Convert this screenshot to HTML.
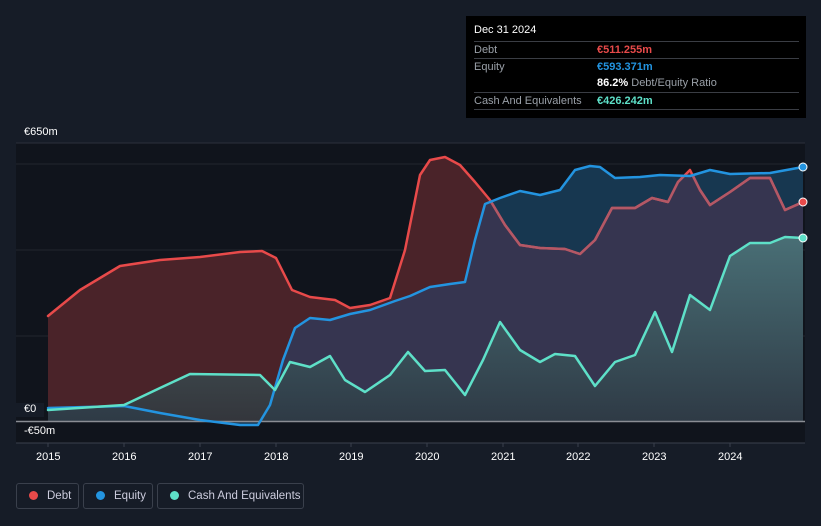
<!DOCTYPE html>
<html><head><meta charset="utf-8"><style>
body{margin:0;width:821px;height:526px;background:#161c27;font-family:"Liberation Sans",sans-serif;overflow:hidden;position:relative}
.tt{position:absolute;left:466px;top:16px;width:340px;height:102px;background:#000;color:#fff;font-size:11px}
.tt .r{position:absolute;left:8px;width:325px;border-top:1px solid #3a3d44;height:16px;line-height:16px}
.tt .l{color:#9aa0a8;position:absolute;left:0}
.tt .v{position:absolute;left:123px;font-weight:bold}
.ax{position:absolute;color:#fff;font-size:11px}
.leg{position:absolute;top:483px;height:26px;border:1px solid #3a404c;border-radius:3px;color:#ccd;font-size:11.5px;line-height:24px;box-sizing:border-box;white-space:nowrap}
.leg i{display:inline-block;width:9px;height:9px;border-radius:50%;margin:0 9px 0 12px;vertical-align:-1px}
</style></head><body>
<svg width="821" height="526" style="position:absolute;left:0;top:0">
<defs>
<clipPath id="eq"><polygon points="48,421 48,408 124,406 160,413 200,420 240,425 258,425 270,405 283,360 295,328 310,318 330,320 350,314 370,310 395,301 410,296 430,287 450,284 465,282 475,240 485,204 500,198 520,191 540,195 560,190 575,170 590,166 600,167 615,178 640,177 660,175 690,176 710,170 730,174 770,173 803,167 803,430 48,430"/></clipPath>
<linearGradient id="cg" x1="0" y1="0" x2="0" y2="1"><stop offset="0" stop-color="#4f8282"/><stop offset="1" stop-color="#2c3c42"/></linearGradient>
</defs>
<rect x="16" y="143" width="789" height="300" fill="#10141c"/>
<line x1="16" y1="143" x2="805" y2="143" stroke="#2c313b"/>
<line x1="16" y1="164" x2="805" y2="164" stroke="#22262e"/>
<line x1="16" y1="250" x2="805" y2="250" stroke="#22262e"/>
<line x1="16" y1="336" x2="805" y2="336" stroke="#22262e"/>
<polygon fill="#4a2329" points="48,421 48,316 80,290 120,266 160,260 200,257 240,252 262,251 276,258 292,290 310,297 335,300 350,308 370,305 390,298 405,250 420,175 430,160 445,157 460,165 475,182 490,200 505,225 520,245 540,248 565,249 580,254 595,240 612,208 635,208 652,198 668,202 678,182 690,170 700,190 710,205 730,192 750,178 770,178 785,210 803,202 803,421"/>
<polygon fill="#173750" points="48,421 48,408 124,406 160,413 200,420 240,425 258,425 270,405 283,360 295,328 310,318 330,320 350,314 370,310 395,301 410,296 430,287 450,284 465,282 475,240 485,204 500,198 520,191 540,195 560,190 575,170 590,166 600,167 615,178 640,177 660,175 690,176 710,170 730,174 770,173 803,167 803,421"/>
<polygon clip-path="url(#eq)" fill="#363550" points="48,421 48,316 80,290 120,266 160,260 200,257 240,252 262,251 276,258 292,290 310,297 335,300 350,308 370,305 390,298 405,250 420,175 430,160 445,157 460,165 475,182 490,200 505,225 520,245 540,248 565,249 580,254 595,240 612,208 635,208 652,198 668,202 678,182 690,170 700,190 710,205 730,192 750,178 770,178 785,210 803,202 803,421"/>
<polygon fill="url(#cg)" fill-opacity="0.75" points="48,421 48,410 124,405 160,388 190,374 260,375 275,390 290,362 310,367 330,356 345,380 365,392 390,375 408,352 425,371 445,370 465,395 483,360 500,322 520,350 540,362 555,354 575,356 595,386 615,362 635,355 655,312 672,352 690,295 710,310 730,256 750,243 770,243 785,237 803,238 803,421"/>
<line x1="16" y1="421.5" x2="805" y2="421.5" stroke="#8a8d94" stroke-width="1.5"/>
<g fill="none" stroke-width="2.5" stroke-linejoin="round" stroke-linecap="round">
<polyline stroke="#e84a4a" points="48,316 80,290 120,266 160,260 200,257 240,252 262,251 276,258 292,290 310,297 335,300 350,308 370,305 390,298 405,250 420,175 430,160 445,157 460,165 475,182 490,200 505,225 520,245 540,248 565,249 580,254 595,240 612,208 635,208 652,198 668,202 678,182 690,170 700,190 710,205 730,192 750,178 770,178 785,210 803,202"/>
<polyline clip-path="url(#eq)" stroke="#b35866" points="48,316 80,290 120,266 160,260 200,257 240,252 262,251 276,258 292,290 310,297 335,300 350,308 370,305 390,298 405,250 420,175 430,160 445,157 460,165 475,182 490,200 505,225 520,245 540,248 565,249 580,254 595,240 612,208 635,208 652,198 668,202 678,182 690,170 700,190 710,205 730,192 750,178 770,178 785,210 803,202"/>
<polyline stroke="#2394e0" points="48,408 124,406 160,413 200,420 240,425 258,425 270,405 283,360 295,328 310,318 330,320 350,314 370,310 395,301 410,296 430,287 450,284 465,282 475,240 485,204 500,198 520,191 540,195 560,190 575,170 590,166 600,167 615,178 640,177 660,175 690,176 710,170 730,174 770,173 803,167"/>
<polyline stroke="#5ee0c8" points="48,410 124,405 160,388 190,374 260,375 275,390 290,362 310,367 330,356 345,380 365,392 390,375 408,352 425,371 445,370 465,395 483,360 500,322 520,350 540,362 555,354 575,356 595,386 615,362 635,355 655,312 672,352 690,295 710,310 730,256 750,243 770,243 785,237 803,238"/>
</g>
<circle cx="803" cy="167" r="4" fill="#2394e0" stroke="#fff"/>
<circle cx="803" cy="202" r="4" fill="#e84a4a" stroke="#fff"/>
<circle cx="803" cy="238" r="4" fill="#5ee0c8" stroke="#fff"/>
<line x1="16" y1="443" x2="805" y2="443" stroke="#3a404c"/>
<g stroke="#3a404c"><line x1="48" y1="443" x2="48" y2="447"/><line x1="124" y1="443" x2="124" y2="447"/><line x1="200" y1="443" x2="200" y2="447"/><line x1="276" y1="443" x2="276" y2="447"/><line x1="351" y1="443" x2="351" y2="447"/><line x1="427" y1="443" x2="427" y2="447"/><line x1="503" y1="443" x2="503" y2="447"/><line x1="578" y1="443" x2="578" y2="447"/><line x1="654" y1="443" x2="654" y2="447"/><line x1="730" y1="443" x2="730" y2="447"/></g>
</svg>
<div class="ax" style="left:24px;top:126px">€650m</div>
<div class="ax" style="left:16px;top:403px;background:#161c27;padding:0 8px 2px 8px">€0</div>
<div class="ax" style="left:24px;top:425px">-€50m</div>
<div class="ax" style="left:36px;top:451px">2015</div>
<div class="ax" style="left:112px;top:451px">2016</div>
<div class="ax" style="left:188px;top:451px">2017</div>
<div class="ax" style="left:264px;top:451px">2018</div>
<div class="ax" style="left:339px;top:451px">2019</div>
<div class="ax" style="left:415px;top:451px">2020</div>
<div class="ax" style="left:491px;top:451px">2021</div>
<div class="ax" style="left:566px;top:451px">2022</div>
<div class="ax" style="left:642px;top:451px">2023</div>
<div class="ax" style="left:718px;top:451px">2024</div>
<div class="tt">
<div style="position:absolute;left:8px;top:8px;font-size:11px">Dec 31 2024</div>
<div class="r" style="top:25px"><span class="l">Debt</span><span class="v" style="color:#e84a4a">€511.255m</span></div>
<div class="r" style="top:42px"><span class="l">Equity</span><span class="v" style="color:#2394e0">€593.371m</span></div>
<div class="r" style="top:59px;border-top:none"><span class="v">86.2% <span style="color:#9aa0a8;font-weight:normal">Debt/Equity Ratio</span></span></div>
<div class="r" style="top:76px;border-bottom:1px solid #3a3d44"><span class="l">Cash And Equivalents</span><span class="v" style="color:#5ee0c8">€426.242m</span></div>
</div>
<div class="leg" style="left:16px;width:63px"><i style="background:#e84a4a"></i>Debt</div>
<div class="leg" style="left:83px;width:70px"><i style="background:#2394e0"></i>Equity</div>
<div class="leg" style="left:157px;width:147px"><i style="background:#5ee0c8"></i>Cash And Equivalents</div>
</body></html>
